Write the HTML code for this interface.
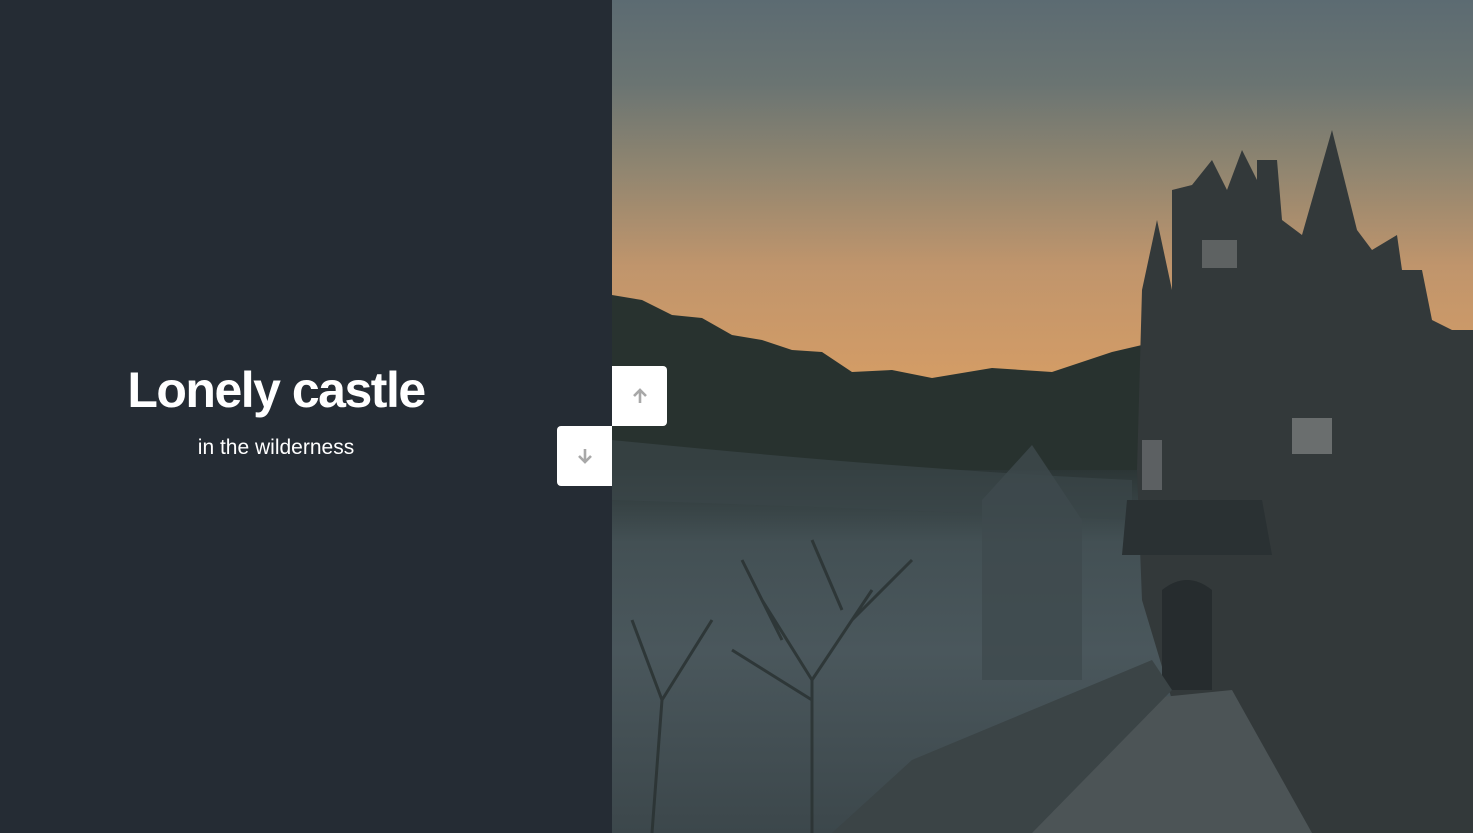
<!DOCTYPE html>
<html><head><meta charset="utf-8"><style>
html,body{margin:0;padding:0;width:1473px;height:833px;overflow:hidden;background:#252c34;font-family:"Liberation Sans",sans-serif}
.left{position:absolute;left:0;top:0;width:612px;height:833px;background:#252c34}
h1{position:absolute;left:0;width:552px;top:358px;margin:0;text-align:center;color:#fff;font-size:50px;font-weight:bold;letter-spacing:-1.5px;line-height:64px}
p{position:absolute;left:0;width:552px;top:435px;margin:0;text-align:center;color:#fff;font-size:21px;line-height:26px}
.right{position:absolute;left:612px;top:0;width:861px;height:833px;overflow:hidden}
.btn{position:absolute;width:55px;height:60px;background:#fff;display:flex;align-items:center;justify-content:center}
</style></head><body>
<div class="left"><h1>Lonely castle</h1><p>in the wilderness</p></div>
<div class="right">
<svg width="861" height="833" viewBox="0 0 861 833">
<defs>
<linearGradient id="sky" x1="0" y1="0" x2="0" y2="1">
<stop offset="0" stop-color="#5c6b72"/><stop offset="0.1" stop-color="#6a7472"/><stop offset="0.2" stop-color="#8f8570"/><stop offset="0.32" stop-color="#c0956c"/><stop offset="0.45" stop-color="#d39c66"/>
</linearGradient>
<linearGradient id="mist" x1="0" y1="0" x2="0" y2="1">
<stop offset="0" stop-color="#2c3636"/><stop offset="0.2" stop-color="#435054"/><stop offset="0.5" stop-color="#4a575c"/><stop offset="1" stop-color="#3c474b"/>
</linearGradient>
</defs>
<rect width="861" height="833" fill="url(#sky)"/>
<path d="M0 295 L30 300 L60 315 L90 318 L120 335 L150 340 L180 350 L210 352 L240 372 L280 370 L320 378 L380 368 L440 372 L500 352 L530 345 L600 340 L861 330 L861 833 L0 833Z" fill="#28322f"/>
<rect y="470" width="861" height="363" fill="url(#mist)"/>
<path d="M0 440 Q300 470 520 480 L520 520 Q300 510 0 500Z" fill="#3a4648" opacity="0.7"/>
<!-- castle -->
<path d="M530 290 L545 220 L560 290 L560 190 L580 185 L600 160 L615 190 L630 150 L645 180 L645 160 L665 160 L670 220 L690 235 L720 130 L745 230 L760 250 L785 235 L790 270 L810 270 L820 320 L840 330 L861 330 L861 833 L620 833 L620 700 L560 700 L530 600 L525 470Z" fill="#33393a"/>
<path d="M515 500 L650 500 L660 555 L510 555Z" fill="#2a3133"/>
<path d="M370 500 L420 445 L470 520 L470 680 L370 680Z" fill="#3f4a4d" opacity="0.8"/>
<rect x="590" y="240" width="35" height="28" fill="#5e6262"/>
<rect x="680" y="418" width="40" height="36" fill="#6a6e6e"/>
<rect x="530" y="440" width="20" height="50" fill="#5c6062"/>
<path d="M550 590 Q575 570 600 590 L600 690 L550 690Z" fill="#262c2e"/>
<path d="M420 833 L520 700 L620 690 L700 833Z" fill="#4c5456"/>
<path d="M220 833 L300 760 L540 660 L560 690 L420 833Z" fill="#3b4446"/>
<g stroke="#2a3232" stroke-width="3" fill="none" opacity="0.85">
<path d="M200 833 L200 680 L150 600 M200 680 L260 590 M200 700 L120 650 M170 640 L130 560 M240 620 L300 560 M230 610 L200 540"/>
<path d="M40 833 L50 700 L20 620 M50 700 L100 620"/>
</g>
</svg>
</div>
<div class="btn" style="left:612px;top:366px;border-radius:0 4px 4px 0">
<svg width="20" height="20" viewBox="0 0 20 20"><path d="M10 17V4M4 10l6-6 6 6" stroke="#a8a8a8" stroke-width="2.6" fill="none"/></svg></div>
<div class="btn" style="left:557px;top:426px;border-radius:4px 0 0 4px">
<svg width="20" height="20" viewBox="0 0 20 20"><path d="M10 3v13M4 10l6 6 6-6" stroke="#a8a8a8" stroke-width="2.6" fill="none"/></svg></div>
</body></html>
